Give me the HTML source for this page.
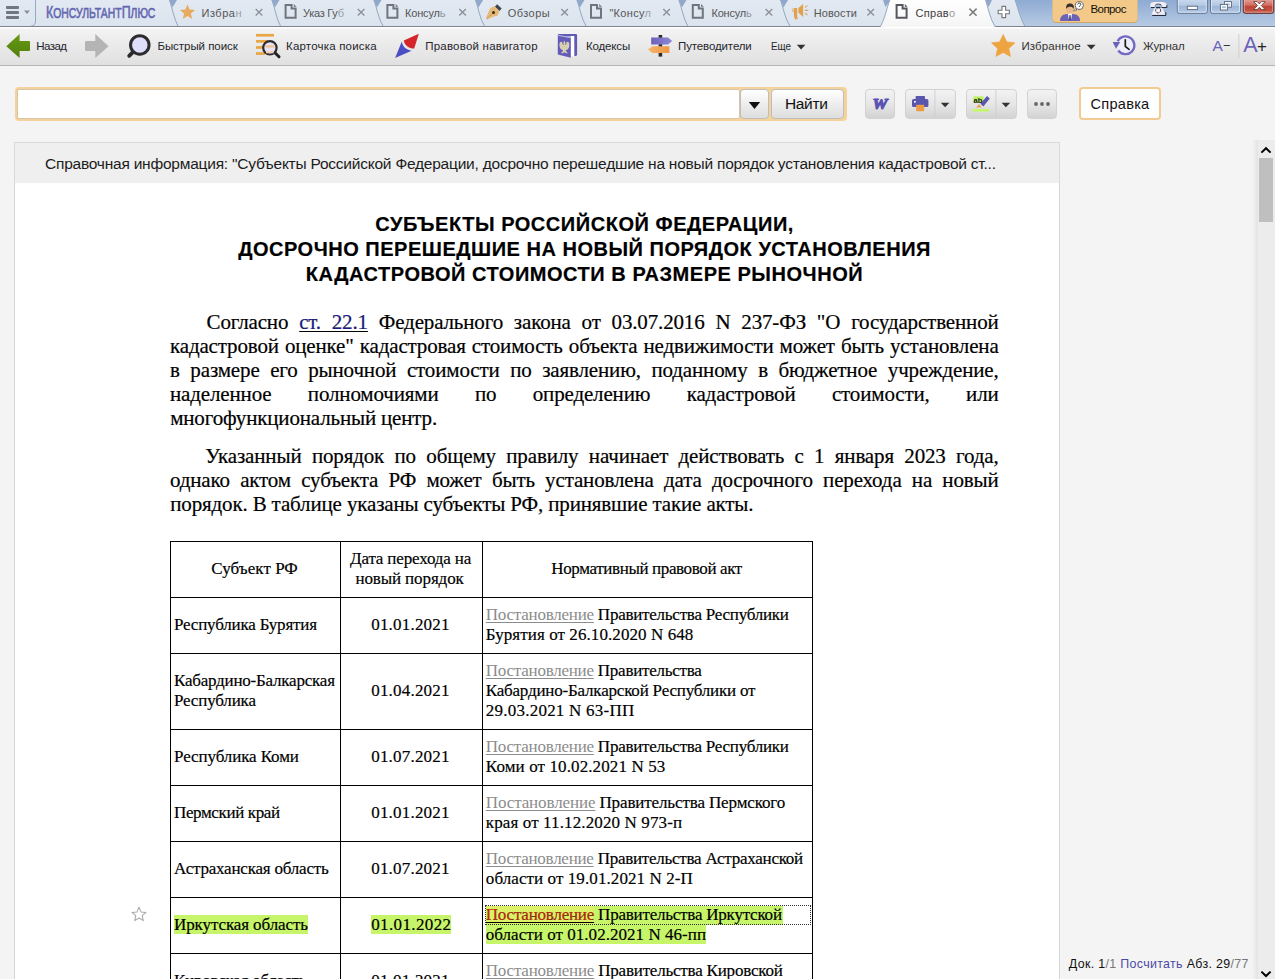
<!DOCTYPE html>
<html><head><meta charset="utf-8"><title>КонсультантПлюс</title>
<style>
*{box-sizing:border-box;margin:0;padding:0}
html,body{width:1275px;height:979px;overflow:hidden;background:#f4f4f4;font-family:"Liberation Sans",sans-serif;}
.a{position:absolute}
svg{position:absolute;overflow:visible}
.fit{position:absolute;white-space:nowrap;display:inline-block}
#tabbar{position:absolute;left:0;top:0;width:1275px;height:27px;background:#dfe8f3;overflow:hidden}
#tabline{position:absolute;left:0;top:26px;width:1275px;height:1px;background:#8e9cb0}
.tt{font-size:11px;color:#555;top:4.5px;line-height:16px}
.tx{position:absolute;top:9px;width:8px;height:8px}
#toolbar{position:absolute;left:0;top:27px;width:1275px;height:39px;background:linear-gradient(#ffffff 0,#ffffff 1px,#f3f3f3 2px,#eaeaea 50%,#e0e0e0 100%);border-bottom:1px solid #b5b5b5}
.tl{font-size:11.5px;color:#26262e;top:38.8px;line-height:14px}
#dochead{position:absolute;left:14px;top:142px;width:1046px;height:41px;background:#efefef;border:1px solid #dadada;border-bottom:none}
#doc{position:absolute;left:14px;top:183px;width:1046px;height:800px;background:#fff;border-left:1px solid #d6d6d6;border-right:1px solid #d6d6d6}
.h{font-size:20px;line-height:25px;font-weight:bold;color:#000;-webkit-text-stroke:0.2px #000}
.jl{position:absolute;white-space:nowrap;font-family:"Liberation Serif",serif;font-size:21px;line-height:24px;letter-spacing:-0.15px;text-align:justify;text-align-last:justify;color:#000;height:24px;overflow:visible;-webkit-text-stroke:0.2px #000}
.sl{font-family:"Liberation Serif",serif;font-size:21px;line-height:24px;color:#000;-webkit-text-stroke:0.2px #000}
.tc{font-family:"Liberation Serif",serif;font-size:17px;line-height:20px;color:#000;-webkit-text-stroke:0.18px #000}
.g{color:#8c8c8c;-webkit-text-stroke:0;text-decoration:underline;text-decoration-thickness:1px;text-underline-offset:2px}
.ln{position:absolute;background:#000}
.hl{position:absolute;background:#c6f56a}
.btn{position:absolute;border:1px solid #d2d2d2;border-radius:4px;background:linear-gradient(#f3f3f3,#e6e6e6 50%,#d3d3d3)}
</style></head><body>
<!-- ===== TAB BAR ===== -->
<div id="tabbar">
<svg width="1275" height="27" viewBox="0 0 1275 27" style="left:0;top:0">
<defs>
<linearGradient id="gbl" x1="0" y1="0" x2="0" y2="1"><stop offset="0" stop-color="#8eabd3"></stop><stop offset="1" stop-color="#b7cae3"></stop></linearGradient>
<linearGradient id="gact" x1="0" y1="0" x2="0" y2="1"><stop offset="0" stop-color="#ffffff"></stop><stop offset="1" stop-color="#f5f5f5"></stop></linearGradient>
<linearGradient id="gtab" x1="0" y1="0" x2="0" y2="1"><stop offset="0" stop-color="#e2e9f2"></stop><stop offset="1" stop-color="#dbe4ee"></stop></linearGradient>
<linearGradient id="gwb" x1="0" y1="0" x2="0" y2="1"><stop offset="0" stop-color="#cbdaee"></stop><stop offset="0.45" stop-color="#b4c8e3"></stop><stop offset="0.5" stop-color="#9db6d8"></stop><stop offset="1" stop-color="#b3c8e4"></stop></linearGradient>
<linearGradient id="gcl" x1="0" y1="0" x2="0" y2="1"><stop offset="0" stop-color="#e3a59d"></stop><stop offset="0.45" stop-color="#d0695c"></stop><stop offset="0.5" stop-color="#bf4334"></stop><stop offset="1" stop-color="#c65b4b"></stop></linearGradient>
</defs>
<rect x="0" y="0" width="1275" height="27" fill="url(#gtab)"></rect>
<!-- right blue area -->
<path d="M1015,0 C1018,8 1020,18 1024.7,26 L1275,26 L1275,0 Z" fill="url(#gbl)"></path>

<!-- bottom line -->
<rect x="0" y="26" width="881" height="1" fill="#7c848f"></rect>
<rect x="995" y="26" width="280" height="1" fill="#7c848f"></rect>
<!-- blue triangles between tabs -->
<g fill="#8fa8cb">
<path d="M169.0,0 h8 l-4.6,7.4 z"></path><path d="M271.5,0 h8 l-4.6,7.4 z"></path><path d="M373.5,0 h8 l-4.6,7.4 z"></path><path d="M475.1,0 h8 l-4.6,7.4 z"></path><path d="M576.5,0 h8 l-4.6,7.4 z"></path><path d="M678.5,0 h8 l-4.6,7.4 z"></path><path d="M780.1,0 h8 l-4.6,7.4 z"></path>
<path d="M883,0 h8 l-5.6,7 z"></path><path d="M984,0 h8 l-3.4,7 z"></path>
</g>
<!-- tab boundaries -->
<g fill="none" stroke="#97a8c0" stroke-width="1">
<path d="M35.5,0 V21 C35.5,24 34,26 31,26"></path>
<path d="M169.5,0 C172,7 174,19 178,26"></path>
<path d="M272,0 C274.5,7 276.5,19 280.5,26"></path>
<path d="M374,0 C376.5,7 378.5,19 383,26"></path>
<path d="M475.6,0 C478,7 480,19 484.4,26"></path>
<path d="M577,0 C579.5,7 581.5,19 586,26"></path>
<path d="M679,0 C681.5,7 683.5,19 687.7,26"></path>
<path d="M780.6,0 C783,7 785,19 790,26"></path>
<path d="M1015,0 C1018,8 1020,18 1024.7,26"></path>
</g>
<!-- active tab -->
<path d="M880.4,27 C885,19 887,7 889.8,0 L985.5,0 C988,7 990,19 995,27 Z" fill="url(#gact)"></path>
<path d="M880.4,26.5 C885,19 887,7 889.8,0 M985.5,0 C988,7 990,19 995,26.5" fill="none" stroke="#97a8c0" stroke-width="1"></path>
<!-- hamburger -->
<g fill="#72777f"><rect x="6" y="6" width="13" height="2.9" rx="0.9"></rect><rect x="6" y="11" width="13" height="2.9" rx="0.9"></rect><rect x="6" y="16" width="13" height="2.9" rx="0.9"></rect></g>
<path d="M24,10.5 h6 l-3,3.5 z" fill="#8a9099"></path>
<!-- tab1 star -->
<path d="M187.5,4.6 l2.1,5 5.4,0.45 -4.1,3.55 1.25,5.3 -4.65,-2.8 -4.65,2.8 1.25,-5.3 -4.1,-3.55 5.4,-0.45 z" fill="#e9a95f"></path>
<!-- doc icons -->
<path d="M285.6,5 h6 v3.5 h4 v9.3 h-10 z" fill="none" stroke="#70757d" stroke-width="2"></path><path d="M293.8,4 l2.8,2.7 h-2.8 z" fill="#70757d"></path>
<path d="M387.4,5 h6 v3.5 h4 v9.3 h-10 z" fill="none" stroke="#70757d" stroke-width="2"></path><path d="M395.6,4 l2.8,2.7 h-2.8 z" fill="#70757d"></path>
<path d="M591.0,5 h6 v3.5 h4 v9.3 h-10 z" fill="none" stroke="#70757d" stroke-width="2"></path><path d="M599.2,4 l2.8,2.7 h-2.8 z" fill="#70757d"></path>
<path d="M692.8,5 h6 v3.5 h4 v9.3 h-10 z" fill="none" stroke="#70757d" stroke-width="2"></path><path d="M701.0,4 l2.8,2.7 h-2.8 z" fill="#70757d"></path>
<path d="M896.6,5 h6 v3.5 h4 v9.3 h-10 z" fill="none" stroke="#55585e" stroke-width="2"></path><path d="M904.8,4 l2.8,2.7 h-2.8 z" fill="#55585e"></path>
<!-- pen icon (Обзоры) -->
<path d="M497.1,4.2 L501.7,8.5 499.5,10.9 494.9,6.7 Z" fill="#3d4450"></path>
<path d="M490,8.4 L493.9,6.2 495,6.8 499.4,10.9 497.8,15.4 492.5,17.1 486.9,19.6 486,18 Z" fill="#e6b877"></path>
<path d="M487.2,18.6 L493.2,12.8" stroke="#b98a45" stroke-width="0.9" stroke-dasharray="1.2 0.8" fill="none"></path>
<circle cx="493.5" cy="12.4" r="1.5" fill="#3a2e10"></circle>
<!-- megaphone (Новости) -->
<path d="M792.4,8.2 h1.2 v4 h-1.2 z" fill="#e9b06a"></path>
<path d="M794,8 h3.2 v8.6 l0.6,2.4 -2.6,0.6 -1.2,-3 z" fill="#e2a14e"></path>
<path d="M798.4,8 L803.1,3.9 V17 L798.4,12.6 Z" fill="#e3a04a"></path>
<path d="M805.4,7.2 l1.7,-1.4 M805.4,10.4 h2.4 M805.4,13.4 l1.7,1.3" stroke="#d6a56a" stroke-width="1.1" fill="none" stroke-linecap="round"></path>
<!-- close Xs -->
<g stroke="#8d929a" stroke-width="1.4" fill="none">
<path d="M255.7,9 l6.6,6.6 m0,-6.6 l-6.6,6.6"></path>
<path d="M357.8,9 l6.6,6.6 m0,-6.6 l-6.6,6.6"></path>
<path d="M459.3,9 l6.6,6.6 m0,-6.6 l-6.6,6.6"></path>
<path d="M561.3,9 l6.6,6.6 m0,-6.6 l-6.6,6.6"></path>
<path d="M663.3,9 l6.6,6.6 m0,-6.6 l-6.6,6.6"></path>
<path d="M765.6,9 l6.6,6.6 m0,-6.6 l-6.6,6.6"></path>
<path d="M867.4,9 l6.6,6.6 m0,-6.6 l-6.6,6.6"></path>
</g>
<path d="M969.4,8.6 l7.2,7.2 m0,-7.2 l-7.2,7.2" stroke="#7b7b7b" stroke-width="1.5" fill="none"></path>
<!-- plus tab -->
<path d="M1002,6.4 h3.6 v3.8 h3.8 v3.6 h-3.8 v3.8 h-3.6 v-3.8 h-3.8 v-3.6 h3.8 z" fill="#fff" stroke="#777" stroke-width="1.1"></path>
<!-- Вопрос button -->
<rect x="1052.5" y="-4" width="85" height="27" rx="4" fill="#cfa76a"></rect>
<rect x="1052.5" y="-5" width="85" height="27" rx="4" fill="#f2c988"></rect>
<!-- person -->
<g transform="translate(1059,1)">
<path d="M1,20 C1,15 4,13.5 8,13 h6 C18,13.5 21,15 21,20 z" fill="#6c62b8"></path>
<path d="M9,12.6 h4 l-0.6,5 -1.4,1.6 -1.4,-1.6 z" fill="#fff"></path>
<path d="M10.5,14 h1 l0.5,4.4 -1,1 -1,-1 z" fill="#3d3770"></path>
<ellipse cx="11" cy="8.4" rx="3.6" ry="4.2" fill="#e9b98d"></ellipse>
<path d="M7.2,8 C6.6,3.6 9,2.6 11,2.6 C13.6,2.6 15.4,4 14.8,8 C14,6.4 12.6,5.8 11,5.8 C9.4,5.8 8,6.6 7.2,8 z" fill="#3a2f2a"></path>
<circle cx="20.3" cy="4.6" r="4" fill="#fff" stroke="#5a5a5a" stroke-width="0.9"></circle>
<path d="M16.6,7.6 l-2,2.4 3.4,-1.2 z" fill="#fff" stroke="#5a5a5a" stroke-width="0.7"></path>
<path d="M18.8,3.6 c0,-2 3,-2 3,-0.2 c0,1.2 -1.5,1.2 -1.5,2.4 M20.3,7 v0.2" fill="none" stroke="#333" stroke-width="1"></path>
</g>
<!-- phone -->
<path d="M1150.4,6.9 V4.4 C1150.4,2.5 1152.4,2.1 1158.4,2.1 C1164.4,2.1 1166.4,2.5 1166.4,4.4 V6.9 H1162.3 V5.2 H1154.5 V6.9 Z" fill="#f3eef6"></path>
<path d="M1154.2,8.2 H1162.6 L1165.4,14.7 H1151.4 Z" fill="#f1ecf5"></path>
<path d="M1151,7.5 H1154.6 M1156.2,7.5 H1160.2 M1161.6,7.5 H1166.9 V5.2 M1152.2,15.5 H1165.8 V12.2" fill="none" stroke="#1d2531" stroke-width="0.95"></path>
<path d="M1155.4,5 C1156.4,3.8 1160.2,3.8 1161.2,5" fill="none" stroke="#1d2531" stroke-width="0.9"></path>
<circle cx="1158.1" cy="10.4" r="2.5" fill="#f7f3f9" stroke="#1d2531" stroke-width="1" stroke-dasharray="2.2 1.1"></circle>
<!-- window buttons -->
<g>
<path d="M1177.3,-1 h30 v12.3 a2,2 0 0 1 -2,2 h-26 a2,2 0 0 1 -2,-2 z" fill="url(#gwb)" stroke="#5f738f" stroke-width="1"></path>
<path d="M1178.3,0 v11 a1.2,1.2 0 0 0 1.2,1.2 h25.6 a1.2,1.2 0 0 0 1.2,-1.2 v-11" fill="none" stroke="#e5edf7" stroke-width="0.9" opacity="0.85"></path>
<rect x="1187.3" y="6.2" width="10" height="3.4" fill="#fff" stroke="#56657d" stroke-width="0.9"></rect>
<path d="M1210.5,-1 h30 v12.3 a2,2 0 0 1 -2,2 h-26 a2,2 0 0 1 -2,-2 z" fill="url(#gwb)" stroke="#5f738f" stroke-width="1"></path>
<path d="M1211.5,0 v11 a1.2,1.2 0 0 0 1.2,1.2 h25.6 a1.2,1.2 0 0 0 1.2,-1.2 v-11" fill="none" stroke="#e5edf7" stroke-width="0.9" opacity="0.85"></path>
<rect x="1224.4" y="1.6" width="7" height="5.6" fill="#fff" stroke="#56657d" stroke-width="0.9"></rect><rect x="1226" y="3.4" width="3.8" height="2" fill="#a9bfdd"></rect>
<rect x="1220.4" y="4.4" width="7" height="5.6" fill="#fff" stroke="#56657d" stroke-width="0.9"></rect><rect x="1222" y="6.2" width="3.8" height="2" fill="#a9bfdd"></rect>
<path d="M1243.3,-1 h30.4 v12.3 a2,2 0 0 1 -2,2 h-26.4 a2,2 0 0 1 -2,-2 z" fill="url(#gcl)" stroke="#5e231d" stroke-width="1"></path>
<path d="M1244.3,0 v11 a1.2,1.2 0 0 0 1.2,1.2 h26 a1.2,1.2 0 0 0 1.2,-1.2 v-11" fill="none" stroke="#f3c4bd" stroke-width="0.9" opacity="0.7"></path>
<path d="M1253.6,1.6 h3.6 l2.2,2.3 2.2,-2.3 h3.6 l-3.9,4 3.9,4 h-3.6 l-2.2,-2.3 -2.2,2.3 h-3.6 l3.9,-4 z" fill="#fff" stroke="#5a3430" stroke-width="0.8"></path>
</g>
</svg>
<!-- logo -->
<span class="fitx a" style="left: 45.7px; top: 2px; line-height: 20px; color: rgb(100, 102, 176); -webkit-text-stroke: 0.6px rgb(100, 102, 176); white-space: nowrap; font-size: 14.6px; transform-origin: 0px 50%; display: inline-block; transform: scaleX(0.7126);"><span style="font-size:17.4px">К</span>ОНСУЛЬТАНТ<span style="font-size:17.4px">П</span>ЛЮС</span>
<!-- tab labels -->
<span class="fit tt" style="left: 201.5px; letter-spacing: 0.509px;">Избра<span style="color:#9aa0a8">н</span></span>
<span class="fit tt" style="left: 303px; letter-spacing: -0.259px;">Указ Гу<span style="color:#9aa0a8">б</span></span>
<span class="fit tt" style="left: 405px; letter-spacing: -0.169px;">Консул<span style="color:#8f959d">ь</span></span>
<span class="fit tt" style="left: 507.7px; letter-spacing: 0.463px;">Обзоры</span>
<span class="fit tt" style="left: 609.4px; letter-spacing: 0.319px;">"Консу<span style="color:#9aa0a8">л</span></span>
<span class="fit tt" style="left: 711.5px; letter-spacing: -0.219px;">Консул<span style="color:#8f959d">ь</span></span>
<span class="fit tt" style="left: 813.7px; letter-spacing: 0.118px;">Новости</span>
<span class="fit tt" style="left: 915.6px; color: rgb(60, 60, 60); letter-spacing: 0.283px;">Справ<span style="color:#9a9a9a">о</span></span>
<span class="fit a" style="left: 1090.5px; top: 1.2px; font-size: 11.5px; line-height: 16px; color: rgb(17, 17, 17); letter-spacing: -0.589px;">Вопрос</span>
</div>
<!-- ===== TOOLBAR ===== -->
<div id="toolbar"></div>
<svg width="1275" height="38" viewBox="0 27 1275 38" style="left:0;top:27px">
<defs>
<linearGradient id="ggr" x1="0" y1="0" x2="0" y2="1"><stop offset="0" stop-color="#6a9a14"></stop><stop offset="1" stop-color="#4f7f0c"></stop></linearGradient>
<linearGradient id="gpu" x1="0" y1="0" x2="1" y2="0"><stop offset="0" stop-color="#6a62b8"></stop><stop offset="1" stop-color="#8f88d6"></stop></linearGradient>
<linearGradient id="gor" x1="0" y1="0" x2="1" y2="0"><stop offset="0" stop-color="#f6b46a"></stop><stop offset="1" stop-color="#ec9642"></stop></linearGradient>
</defs>
<!-- back arrow -->
<path d="M6.3,46.2 L19.6,34 V41 H29 a1,1 0 0 1 1,1 V50 a1,1 0 0 1 -1,1 H19.6 V58 Z" fill="url(#ggr)"></path>
<!-- forward arrow -->
<path d="M108.6,46.2 L95.3,34 V41 H86 a1,1 0 0 0 -1,1 V50 a1,1 0 0 0 1,1 H95.3 V58 Z" fill="#b4b4b4"></path>
<!-- magnifier -->
<path d="M133.6,51.4 L129.2,55.8" stroke="#2b2b30" stroke-width="3.8" stroke-linecap="round"></path>
<circle cx="139.8" cy="44.9" r="9.25" fill="#dedefb" stroke="#2b2b30" stroke-width="3"></circle>
<!-- search card icon -->
<g fill="#eaa545"><rect x="256" y="33.9" width="18" height="2.7"></rect><rect x="256" y="40" width="12" height="2.7"></rect><rect x="256" y="46.1" width="8" height="2.7"></rect><rect x="256" y="52.2" width="9" height="2.7"></rect></g>
<circle cx="269.9" cy="47.8" r="6.7" fill="#e9e2f6" stroke="#2b2b30" stroke-width="2.2"></circle>
<rect x="265.4" y="45.2" width="9" height="2.4" fill="#f1c596"></rect><rect x="266" y="51.3" width="7.8" height="2" fill="#f3ceaa"></rect>
<path d="M275.2,53 L279,56.8" stroke="#222226" stroke-width="3" stroke-linecap="round"></path>
<!-- navigator icon -->
<path d="M418.8,33.8 L403.8,40.4 C404.4,45 408.6,48.6 414.2,48.6 Z" fill="#d4262a"></path>
<path d="M401.8,41.6 C402.6,46.6 406.2,50 411.6,50.7 L395.1,57.9 Z" fill="#4a4fc4"></path>
<!-- codex book -->
<path d="M557.8,35.4 Q557.8,34 559.2,34 H575.8 Q577.1,34 577.1,35.2 V54.8 Q577.1,55.9 575.8,55.9 H574 V36.4 H570 Z" fill="#5f5ab4"></path>
<rect x="570.7" y="36" width="3.6" height="20.3" fill="#ffffff"></rect>
<path d="M557.8,34.8 L569.6,36.9 Q570.8,37.2 570.8,38.4 V57.8 L557.8,54.6 Z" fill="#625cb8"></path>
<path d="M558.2,35.4 L570,37.6" stroke="#cfcbf2" stroke-width="0.8" fill="none"></path>
<g fill="#d6d0b2">
<path d="M564.4,40.4 c-0.5,1 -0.9,1.8 -0.9,2.6 c-1.2,-1.4 -2.6,-1.6 -3.6,-0.6 c-0.8,1.2 -0.6,4.6 0.8,6.6 c0.8,1 1.6,1.2 2.4,1 c-0.4,1.2 -1.2,2.4 -2.2,3 c1.4,0.4 2.6,0.2 3.5,-0.8 c0.9,1 2.1,1.2 3.5,0.8 c-1,-0.6 -1.8,-1.8 -2.2,-3 c0.8,0.2 1.6,0 2.4,-1 c1.4,-2 1.6,-5.4 0.8,-6.6 c-1,-1 -2.4,-0.8 -3.6,0.6 c0,-0.8 -0.4,-1.6 -0.9,-2.6 z"></path>
</g>
<path d="M562.4,42.4 l1,2.2 M566.4,42.4 l-1,2.2" stroke="#4c4790" stroke-width="0.8" fill="none"></path>
<!-- signpost -->
<rect x="658.6" y="35" width="3.6" height="21.6" fill="#2c2c2c"></rect>
<path d="M651.2,37.6 H668 l4.2,3.4 -4.2,3.4 H651.2 Z" fill="url(#gpu)"></path>
<path d="M669.4,46.2 H652.4 l-4.4,3.4 4.4,3.4 H669.4 Z" fill="url(#gor)"></path>
<!-- Еще arrow -->
<path d="M796.8,44.8 h8.6 l-4.3,4.6 z" fill="#333"></path>
<!-- favorites star -->
<path d="M1003.2,34.6 l3.5,7.3 8.1,1 -6,5.5 1.6,8 -7.2,-4 -7.2,4 1.6,-8 -6,-5.5 8.1,-1 z" fill="#eda441" stroke="#eda441" stroke-width="0.8" stroke-linejoin="round"></path>
<path d="M1086.8,44.8 h8.8 l-4.4,4.6 z" fill="#333"></path>
<!-- journal clock -->
<circle cx="1125.5" cy="45.3" r="8" fill="#efeef8"></circle>
<path d="M1117.6,41.2 A8.9,8.9 0 1 1 1118.3,50.5" fill="none" stroke="#736bc3" stroke-width="2.3"></path>
<path d="M1112.6,42 h7.6 l-4.2,6.8 z" fill="#6b63ba"></path>
<path d="M1125.3,39.8 V46.4 L1129,49.4" fill="none" stroke="#1c1c1c" stroke-width="1.7" stroke-linecap="round" stroke-linejoin="round"></path>
<!-- A- / A+ separator -->
<rect x="1238.4" y="34" width="1" height="24" fill="#d0d0d0"></rect>
</svg>
<span class="fit tl" style="left: 36.2px; letter-spacing: -0.538px;">Назад</span>
<span class="fit tl" style="left: 157.4px; letter-spacing: -0.046px;">Быстрый поиск</span>
<span class="fit tl" style="left: 286px; letter-spacing: 0.195px;">Карточка поиска</span>
<span class="fit tl" style="left: 425.2px; letter-spacing: 0.216px;">Правовой навигатор</span>
<span class="fit tl" style="left: 586px; letter-spacing: -0.154px;">Кодексы</span>
<span class="fit tl" style="left: 678px; letter-spacing: -0.118px;">Путеводители</span>
<span class="fitx tl a" style="left: 770.5px; transform-origin: 0px 50%; white-space: nowrap; display: inline-block; transform: scaleX(0.8545);">Еще</span>
<span class="fit tl" style="left: 1021.4px; color: rgb(51, 51, 51); letter-spacing: 0.115px;">Избранное</span>
<span class="fit tl" style="left: 1143px; color: rgb(51, 51, 51); letter-spacing: -0.034px;">Журнал</span>
<span class="a" style="left:1212.6px;top:36px;font-size:15.5px;line-height:20px;color:#6b63ba;white-space:nowrap">A<span style="font-size:13px;position:relative;top:-1px;color:#333">−</span></span>
<span class="a" style="left:1243.2px;top:31px;font-size:21.5px;line-height:28px;color:#6b63ba;white-space:nowrap;letter-spacing:-0.5px">A<span style="color:#222;font-size:17px;position:relative;top:0px">+</span></span>
<!-- ===== SEARCH ROW ===== -->
<div class="a" style="left:15px;top:87px;width:832px;height:34px;border-radius:4px;background:#f5d29b"></div>
<div class="a" style="left:17px;top:89px;width:723px;height:30px;border-radius:2px;background:#fff;border:1px solid #d8c6a8"></div>
<div class="btn" style="left:739.6px;top:89.4px;width:29px;height:29.2px;border-color:#bdbdbd;background:linear-gradient(#fff,#ececec 55%,#dedede)"></div>
<div class="btn" style="left:771.4px;top:89.4px;width:73px;height:29.2px;border-color:#bdbdbd;background:linear-gradient(#fff,#ececec 55%,#dedede)"></div>
<span class="fit a" style="left: 785px; top: 94.2px; font-size: 15.5px; line-height: 20px; color: rgb(17, 17, 17); letter-spacing: -0.359px;">Найти</span>
<div class="btn" style="left:865px;top:89px;width:30px;height:29.6px"></div>
<div class="btn" style="left:905px;top:89px;width:51px;height:29.6px"></div>
<div class="btn" style="left:966px;top:89px;width:51px;height:29.6px"></div>
<div class="btn" style="left:1027px;top:89px;width:30px;height:29.6px"></div>
<div class="a" style="left:1079px;top:87px;width:82px;height:33.4px;border:2px solid #f1cb92;border-radius:4px;background:#fff"></div>
<span class="fit a" style="left: 1090.6px; top: 94.6px; font-size: 14.6px; line-height: 18px; color: rgb(17, 17, 17); letter-spacing: 0.225px;">Справка</span>
<svg width="330" height="40" viewBox="740 84 330 40" style="left:740px;top:84px">
<path d="M748.8,102 h11.4 l-5.7,7 z" fill="#111"></path>
<!-- W -->
<text x="872.4" y="109" font-family="Liberation Serif" font-weight="bold" font-style="italic" font-size="15.4" fill="#5a52b2" stroke="#5a52b2" stroke-width="1.15" stroke-linejoin="round" textLength="15" lengthAdjust="spacingAndGlyphs">W</text>
<!-- printer -->
<rect x="915.6" y="96" width="9.4" height="4" rx="0.8" fill="#5a55ad"></rect>
<rect x="912" y="99" width="16.4" height="8" rx="1.6" fill="#5a55ad"></rect>
<rect x="914" y="101" width="1.8" height="1.6" fill="#fff"></rect>
<rect x="916.2" y="104.8" width="8" height="6.4" rx="0.8" fill="#ee9d44"></rect>
<rect x="934.4" y="90" width="1" height="27.6" fill="#cfcfcf"></rect>
<path d="M940.8,102.8 h8.6 l-4.3,4.4 z" fill="#333"></path>
<!-- highlighter -->
<rect x="973.4" y="96.4" width="10.2" height="6.6" fill="#b9f25e"></rect>
<path d="M987,96 l2.8,2.4 -6.4,8 -3,-2.6 z" fill="#5a55ad"></path>
<path d="M976,107.6 l3,-3.6 3,3.6 z" fill="#e9a45a"></path>
<rect x="972.6" y="109" width="16.6" height="2.6" fill="#c6f66a"></rect>
<text x="973.6" y="102.6" font-family="Liberation Sans" font-size="7.6" font-weight="bold" fill="#1c1c1c">ab</text>
<rect x="995.4" y="90" width="1" height="27.6" fill="#cfcfcf"></rect>
<path d="M1001.6,102.8 h8.6 l-4.3,4.4 z" fill="#333"></path>
<!-- dots -->
<g fill="#666"><circle cx="1036" cy="104" r="1.9"></circle><circle cx="1042" cy="104" r="1.9"></circle><circle cx="1048" cy="104" r="1.9"></circle></g>
</svg>
<!-- ===== DOCUMENT ===== -->
<div id="dochead"></div>
<div id="doc"></div>
<span class="fit a" style="left: 45px; top: 155px; font-size: 15.5px; line-height: 18px; color: rgb(28, 28, 28); letter-spacing: -0.226px;">Справочная информация: "Субъекты Российской Федерации, досрочно перешедшие на новый порядок установления кадастровой ст...</span>
<span class="fit h" style="left: 375.2px; top: 211.9px; letter-spacing: 0.546px;">СУБЪЕКТЫ РОССИЙСКОЙ ФЕДЕРАЦИИ,</span>
<span class="fit h" style="left: 238.2px; top: 237px; letter-spacing: 0.518px;">ДОСРОЧНО ПЕРЕШЕДШИЕ НА НОВЫЙ ПОРЯДОК УСТАНОВЛЕНИЯ</span>
<span class="fit h" style="left: 305.8px; top: 262.1px; letter-spacing: 0.537px;">КАДАСТРОВОЙ СТОИМОСТИ В РАЗМЕРЕ РЫНОЧНОЙ</span>
<div class="jl" style="left:206.6px;top:310px;width:792.0px">Согласно <span style="color:#1b1b8f;text-decoration:underline;text-decoration-thickness:1px;text-underline-offset:2px">ст. 22.1</span> Федерального закона от 03.07.2016 N 237-ФЗ "О государственной</div>
<div class="jl" style="left:170px;top:334px;width:828.6px">кадастровой оценке" кадастровая стоимость объекта недвижимости может быть установлена</div>
<div class="jl" style="left:170px;top:358px;width:828.6px">в размере его рыночной стоимости по заявлению, поданному в бюджетное учреждение,</div>
<div class="jl" style="left:170px;top:382px;width:828.6px">наделенное полномочиями по определению кадастровой стоимости, или</div>
<span class="fit sl" style="left: 170.2px; top: 406px; letter-spacing: -0.17px;">многофункциональный центр.</span>
<div class="jl" style="left:205.2px;top:444px;width:793.4px">Указанный порядок по общему правилу начинает действовать с 1 января 2023 года,</div>
<div class="jl" style="left:170px;top:468px;width:828.6px">однако актом субъекта РФ может быть установлена дата досрочного перехода на новый</div>
<span class="fit sl" style="left: 170.2px; top: 492px; letter-spacing: -0.147px;">порядок. В таблице указаны субъекты РФ, принявшие такие акты.</span>
<div class="ln" style="left:170px;top:541px;width:1px;height:440px"></div>
<div class="ln" style="left:340px;top:541px;width:1px;height:440px"></div>
<div class="ln" style="left:482px;top:541px;width:1px;height:440px"></div>
<div class="ln" style="left:812px;top:541px;width:1px;height:440px"></div>
<div class="ln" style="left:170px;top:541px;width:643px;height:1px"></div>
<div class="ln" style="left:170px;top:597px;width:643px;height:1px"></div>
<div class="ln" style="left:170px;top:653px;width:643px;height:1px"></div>
<div class="ln" style="left:170px;top:729px;width:643px;height:1px"></div>
<div class="ln" style="left:170px;top:785px;width:643px;height:1px"></div>
<div class="ln" style="left:170px;top:841px;width:643px;height:1px"></div>
<div class="ln" style="left:170px;top:897px;width:643px;height:1px"></div>
<div class="ln" style="left:170px;top:953px;width:643px;height:1px"></div>
<div class="hl" style="left:173.6px;top:915px;width:134.6px;height:19px"></div>
<div class="hl" style="left:370.6px;top:915px;width:80.8px;height:19px"></div>
<div class="hl" style="left:485.8px;top:906.2px;width:297px;height:19px"></div>
<div class="hl" style="left:485.8px;top:925px;width:220.4px;height:19.2px"></div>
<div class="a" style="left:485.8px;top:906.2px;width:108px;height:18px;background:#dcf068"></div>
<div class="a" style="left:485.4px;top:904.6px;width:325.6px;height:20.4px;border:1px dotted #333"></div>
<span class="fit tc" style="left: 211.3px; top: 559.2px; letter-spacing: 0.049px;">Субъект РФ</span>
<span class="fit tc" style="left: 350px; top: 549.2px; letter-spacing: -0.157px;">Дата перехода на</span>
<span class="fit tc" style="left: 355.4px; top: 569.2px; letter-spacing: -0.111px;">новый порядок</span>
<span class="fit tc" style="left: 551.3px; top: 559.2px; letter-spacing: -0.37px;">Нормативный правовой акт</span>
<span class="fit tc" style="left: 174px; top: 615.2px; letter-spacing: -0.19px;">Республика Бурятия</span>
<span class="fit tc" style="left: 174px; top: 671.2px; letter-spacing: -0.213px;">Кабардино-Балкарская</span>
<span class="fit tc" style="left: 174px; top: 691.2px; letter-spacing: -0.165px;">Республика</span>
<span class="fit tc" style="left: 174px; top: 747.2px; letter-spacing: -0.096px;">Республика Коми</span>
<span class="fit tc" style="left: 174px; top: 803.2px; letter-spacing: -0.365px;">Пермский край</span>
<span class="fit tc" style="left: 174px; top: 859.2px; letter-spacing: -0.208px;">Астраханская область</span>
<span class="fit tc" style="left: 174px; top: 915.2px; letter-spacing: -0.099px;">Иркутская область</span>
<span class="fit tc" style="left: 174px; top: 971.2px; letter-spacing: -0.226px;">Кировская область</span>
<span class="fit tc" style="left: 371.2px; top: 615.2px; letter-spacing: 0.2px;">01.01.2021</span>
<span class="fit tc" style="left: 371.2px; top: 681.2px; letter-spacing: 0.2px;">01.04.2021</span>
<span class="fit tc" style="left: 371.2px; top: 747.2px; letter-spacing: 0.2px;">01.07.2021</span>
<span class="fit tc" style="left: 371.2px; top: 803.2px; letter-spacing: 0.2px;">01.01.2021</span>
<span class="fit tc" style="left: 371.2px; top: 859.2px; letter-spacing: 0.2px;">01.07.2021</span>
<span class="fit tc" style="left: 371.2px; top: 915.2px; letter-spacing: 0.378px;">01.01.2022</span>
<span class="fit tc" style="left: 371.2px; top: 971.2px; letter-spacing: 0.2px;">01.01.2021</span>
<span class="fit tc" style="left: 485.8px; top: 605.2px; letter-spacing: -0.237px;"><span class="g">Постановление</span> Правительства Республики</span>
<span class="fit tc" style="left: 485.8px; top: 625.2px; letter-spacing: 0.077px;">Бурятия от 26.10.2020 N 648</span>
<span class="fit tc" style="left: 485.8px; top: 661.2px; letter-spacing: -0.24px;"><span class="g">Постановление</span> Правительства</span>
<span class="fit tc" style="left: 485.8px; top: 681.2px; letter-spacing: -0.196px;">Кабардино-Балкарской Республики от</span>
<span class="fit tc" style="left: 485.8px; top: 701.2px; letter-spacing: 0.229px;">29.03.2021 N 63-ПП</span>
<span class="fit tc" style="left: 485.8px; top: 737.2px; letter-spacing: -0.237px;"><span class="g">Постановление</span> Правительства Республики</span>
<span class="fit tc" style="left: 485.8px; top: 757.2px; letter-spacing: 0.113px;">Коми от 10.02.2021 N 53</span>
<span class="fit tc" style="left: 485.8px; top: 793.2px; letter-spacing: -0.122px;"><span class="g">Постановление</span> Правительства Пермского</span>
<span class="fit tc" style="left: 485.8px; top: 813.2px; letter-spacing: 0.123px;">края от 11.12.2020 N 973-п</span>
<span class="fit tc" style="left: 485.8px; top: 849.2px; letter-spacing: -0.25px;"><span class="g">Постановление</span> Правительства Астраханской</span>
<span class="fit tc" style="left: 485.8px; top: 869.2px; letter-spacing: 0.087px;">области от 19.01.2021 N 2-П</span>
<span class="fit tc" style="left: 485.8px; top: 905.2px; letter-spacing: -0.218px;"><span style="color:#cc2a0c;text-decoration:underline;text-decoration-thickness:1px;text-underline-offset:2px">Постановление</span> Правительства Иркутской</span>
<span class="fit tc" style="left: 485.8px; top: 925.2px; letter-spacing: 0.037px;">области от 01.02.2021 N 46-пп</span>
<span class="fit tc" style="left: 485.8px; top: 961.2px; letter-spacing: -0.208px;"><span class="g">Постановление</span> Правительства Кировской</span>
<svg width="16" height="16" viewBox="0 0 16 16" style="left:131px;top:906px"><path d="M8,1.2 l2,4.7 5,0.5 -3.8,3.3 1.1,4.9 -4.3,-2.6 -4.3,2.6 1.1,-4.9 -3.8,-3.3 5,-0.5 z" fill="none" stroke="#a8a8a8" stroke-width="1.05" stroke-linejoin="round"></path></svg>
<div class="a" style="left:1252px;top:140px;width:6px;height:839px;background:linear-gradient(90deg,rgba(0,0,0,0),rgba(0,0,0,0.07))"></div>
<div class="a" style="left:1258px;top:140px;width:17px;height:839px;background:#ececec"></div>
<div class="a" style="left:1259px;top:158px;width:14px;height:64px;background:#bfbfbf"></div>
<svg width="17" height="839" viewBox="1258 140 17 839" style="left:1258px;top:140px"><path d="M1261.4,152.6 l4.6,-4.4 4.6,4.4 M1261.4,971.6 l4.6,4.4 4.6,-4.4" fill="none" stroke="#000" stroke-width="2"></path></svg>
<span class="fit a" style="left: 1068.8px; top: 955.8px; font-size: 12.4px; line-height: 16px; color: rgb(17, 17, 17); letter-spacing: 0.341px;">Док. 1<span style="color:#777">/1</span> <span style="color:#4b4aa6">Посчитать</span> Абз. 29<span style="color:#777">/77</span></span>

</body></html>
